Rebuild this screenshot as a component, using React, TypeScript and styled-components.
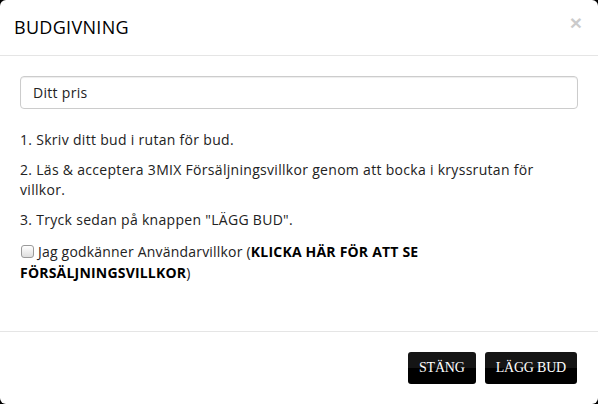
import { createGlobalStyle, styled } from "styled-components";

const GlobalStyle = createGlobalStyle`
  html, body {
    margin: 0;
    padding: 0;
    background-color: #000000;
  }
  body {
    font-family: "Open Sans", "Noto Sans", sans-serif;
  }
`;

const Modal = styled.div`
  width: 598px;
  height: 404px;
  background-color: #FFFFFF;
  border-radius: 6px;
  display: flex;
  flex-direction: column;
  box-sizing: border-box;
  overflow: hidden;
`;

const Header = styled.div`
  display: flex;
  align-items: center;
  justify-content: space-between;
  padding: 15px 15px 15px 14px;
  border-bottom: 1px solid #E5E5E5;
`;

const Title = styled.h4`
  margin: 0;
  font-size: 18px;
  font-weight: 500;
  line-height: 25px;
  letter-spacing: 0.3px;
  color: #000000;
`;

const Close = styled.button`
  border: none;
  background: none;
  padding: 0;
  margin: -10px 1px 0 0;
  font-family: "Liberation Sans", sans-serif;
  font-size: 21px;
  font-weight: bold;
  line-height: 1;
  color: #000000;
  opacity: 0.2;
  cursor: pointer;
`;

const Body = styled.div`
  flex: 1;
  padding: 20px 20px 0 20px;
  font-size: 14px;
  line-height: 20px;
  letter-spacing: 0.3px;
  color: #222222;
`;

const PriceInput = styled.input`
  display: block;
  width: 100%;
  height: 33px;
  box-sizing: border-box;
  padding: 6px 12px;
  margin: 0 0 21px 0;
  font-family: "Open Sans", sans-serif;
  font-size: 14px;
  letter-spacing: 0.3px;
  color: #222222;
  border: 1px solid #CCCCCC;
  border-radius: 4px;
  box-shadow: inset 0 1px 1px rgba(0, 0, 0, 0.075);
  outline: none;

  &::placeholder {
    color: #222222;
  }
`;

const Step = styled.p`
  margin: 0 0 10px 0;
`;

const TermsLabel = styled.label`
  display: block;
  margin-top: 11px;
  line-height: 21px;
  font-size: 14px;
  letter-spacing: 0.2px;
  color: #222222;
`;

const Check = styled.input`
  appearance: none;
  box-sizing: border-box;
  width: 13px;
  height: 13px;
  margin: 0 4px 0 1px;
  vertical-align: -1px;
  border: 1px solid #9A9A9A;
  border-radius: 3px;
  background: linear-gradient(to bottom, #FFFFFF, #DEDEDE);
`;

const TermsLink = styled.a`
  font-weight: bold;
  color: #000000;
  text-decoration: none;
`;

const Footer = styled.div`
  display: flex;
  justify-content: flex-end;
  gap: 9px;
  padding: 20px 21px 20px 20px;
  border-top: 1px solid #E5E5E5;
`;

const Button = styled.button`
  height: 32px;
  padding: 0 11px;
  border: none;
  border-radius: 3px;
  background: linear-gradient(to bottom, #151515 0%, #151515 50%, #000000 50%, #000000 100%);
  color: #FFFFFF;
  font-family: "Liberation Serif", "Times New Roman", serif;
  font-size: 14px;
  letter-spacing: -0.2px;
  cursor: pointer;
`;

const App = () => {
  return (
    <>
      <GlobalStyle />
      <Modal>
        <Header>
          <Title>BUDGIVNING</Title>
          <Close aria-label="Stäng">×</Close>
        </Header>
        <Body>
          <PriceInput type="text" placeholder="Ditt pris" />
          <Step>1. Skriv ditt bud i rutan för bud.</Step>
          <Step>
            2. Läs &amp; acceptera 3MIX Försäljningsvillkor genom att bocka i kryssrutan för villkor.
          </Step>
          <Step>3. Tryck sedan på knappen "LÄGG BUD".</Step>
          <TermsLabel>
            <Check type="checkbox" />
            Jag godkänner Användarvillkor (<TermsLink href="#">KLICKA HÄR FÖR ATT SE FÖRSÄLJNINGSVILLKOR</TermsLink>)
          </TermsLabel>
        </Body>
        <Footer>
          <Button>STÄNG</Button>
          <Button>LÄGG BUD</Button>
        </Footer>
      </Modal>
    </>
  );
};

export default App;
